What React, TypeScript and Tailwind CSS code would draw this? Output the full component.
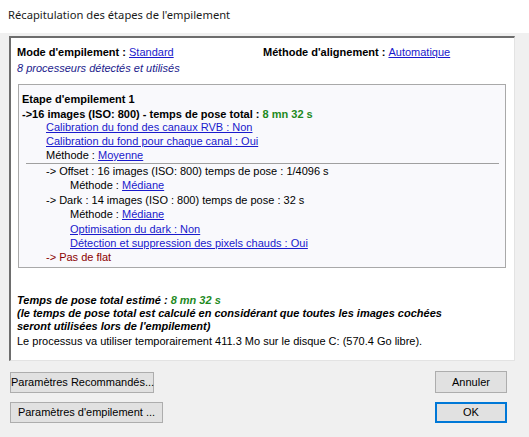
import React from 'react'

const link = 'text-[#1a1acc] underline'

const Btn = ({ label, className = '' }: { label: string; className?: string }) => (
  <button
    className={`h-[21px] bg-[#e1e1e1] text-[11px] text-black leading-none whitespace-nowrap ${className}`}
  >
    {label}
  </button>
)

export default function App() {
  return (
    <div
      className="w-[529px] h-[437px] bg-[#f0f0f0] flex flex-col overflow-hidden text-black"
      style={{ fontFamily: '"Liberation Sans", Arial, sans-serif' }}
    >
      <div
        className="h-[33px] bg-white flex items-center pl-[8px] pb-[2px] text-[11.2px] text-[#1a1a1a]"
        style={{ fontFamily: '"Noto Sans", "Open Sans", sans-serif' }}
      >
        Récapitulation des étapes de l'empilement
      </div>

      <div className="ml-[9px] mt-[3px] w-[506px] h-[325px] bg-white border-t-2 border-l-2 border-t-[#6d6d6d] border-l-[#6d6d6d] border-r border-b border-r-[#e3e3e3] border-b-[#e3e3e3] flex flex-col text-[11px] leading-[14px]">
        <div className="pl-[6px] pt-[7px] flex">
          <div className="w-[246px]">
            <b>Mode d'empilement : </b>
            <span className={link}>Standard</span>
          </div>
          <div>
            <b>Méthode d'alignement : </b>
            <span className={link}>Automatique</span>
          </div>
        </div>
        <div className="pl-[6px] pt-[2px] italic text-[#1a1a8c]">8 processeurs détectés et utilisés</div>

        <div className="ml-[7px] mt-[9px] w-[488px] h-[184px] bg-[#f9f9fc] border border-[#a9a9a9] flex flex-col pt-[7px]">
          <div className="pl-[3px] font-bold">Etape d'empilement 1</div>
          <div className="pl-[3px] font-bold mt-[1px]">
            -&gt;16 images (ISO: 800) - temps de pose total : <span className="text-[#1e8a1e]">8 mn 32 s</span>
          </div>
          <div className="pl-[27px] flex flex-col">
            <span className={`${link} w-fit -mt-[1px]`}>Calibration du fond des canaux RVB : Non</span>
            <span className={`${link} w-fit`}>Calibration du fond pour chaque canal : Oui</span>
            <span>
              Méthode : <span className={link}>Moyenne</span>
            </span>
          </div>
          <div className="ml-[7px] mr-[6px] mt-[1px] border-t border-[#a0a0a0]" />
          <div className="pl-[27px] flex flex-col">
            <span>-&gt; Offset : 16 images (ISO: 800) temps de pose : 1/4096 s</span>
            <span className="pl-[24px]">
              Méthode : <span className={link}>Médiane</span>
            </span>
            <span className="mt-[1px]">-&gt; Dark : 14 images (ISO : 800) temps de pose : 32 s</span>
            <span className="pl-[24px]">
              Méthode : <span className={link}>Médiane</span>
            </span>
            <span className="pl-[24px] mt-[1px]">
              <span className={link}>Optimisation du dark : Non</span>
            </span>
            <span className="pl-[24px]">
              <span className={link}>Détection et suppression des pixels chauds : Oui</span>
            </span>
            <span className="text-[#8b0000]">-&gt; Pas de flat</span>
          </div>
        </div>

        <div className="pl-[6px] mt-[25px] font-bold italic">
          Temps de pose total estimé : <span className="text-[#1e8a1e]">8 mn 32 s</span>
        </div>
        <div className="pl-[6px] font-bold italic leading-[13px]">
          (le temps de pose total est calculé en considérant que toutes les images cochées
          <br />
          seront utilisées lors de l'empilement)
        </div>
        <div className="pl-[6px] mt-[1px]">
          Le processus va utiliser temporairement 411.3 Mo sur le disque C: (570.4 Go libre).
        </div>
      </div>

      <div className="flex justify-between pl-[10px] pr-[22px] mt-[11px]">
        <div className="flex flex-col gap-[9px]">
          <Btn label="Paramètres Recommandés..." className="w-[144px] border border-[#adadad]" />
          <Btn label="Paramètres d'empilement ..." className="w-[153px] border border-[#adadad]" />
        </div>
        <div className="flex flex-col gap-[9px] -mt-[1px]">
          <Btn label="Annuler" className="w-[72px] h-[22px] border border-[#adadad]" />
          <Btn label="OK" className="w-[72px] border-2 border-[#0078d7]" />
        </div>
      </div>
    </div>
  )
}
